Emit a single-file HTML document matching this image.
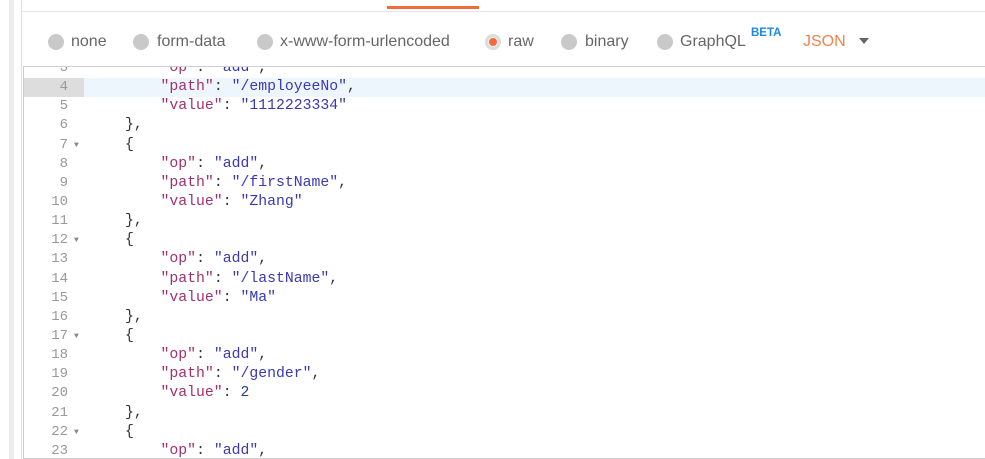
<!DOCTYPE html>
<html><head><style>
body{margin:0;width:985px;height:459px;background:#fff;position:relative;overflow:hidden;font-family:"Liberation Sans",sans-serif}
.strip{position:absolute;left:9px;top:0;width:5px;height:459px;background:#ececec}
.vl{position:absolute;left:21px;top:0;width:1px;height:459px;background:#e0e0e0}
.hl{position:absolute;left:22px;top:11px;right:0;height:1px;background:#e6e6e6}
.tab{position:absolute;left:387px;top:6px;width:92px;height:3px;background:#f26b3a}
.radio{position:absolute;top:33px;font-size:16px;color:#666;white-space:nowrap;line-height:18px}
.dot{position:absolute;top:34px;width:16px;height:16px;border-radius:50%;background:#c9c9c9}
.editor{position:absolute;left:23px;top:66px;right:-2px;height:391px;border:1px solid #cfcfcf;overflow:hidden}
.lines{position:absolute;left:0;top:-8px;width:1000px;font-family:"Liberation Mono",monospace;font-size:14.8px}
.ln{height:19.15px;line-height:19.15px;position:relative;white-space:pre}
.n{position:absolute;left:0;width:44px;text-align:right;color:#999;font-size:14px}
.f{position:absolute;left:50px;color:#888;font-size:8px}
.c{position:absolute;left:101px;color:#333}
.k{color:#a3306d}.s{color:#3939b5}.num{color:#273d8f}
.act{background:#edf6fd}
.act .n{background:#dddddd;width:60px;padding-right:16px;box-sizing:border-box;left:0}
</style></head><body>
<div class="strip"></div><div class="vl"></div>
<div class="tab"></div><div class="hl"></div>
<span class="dot" style="left:48px"></span><div class="radio" style="left:71px">none</div>
<span class="dot" style="left:133px"></span><div class="radio" style="left:157px">form-data</div>
<span class="dot" style="left:257px"></span><div class="radio" style="left:280px">x-www-form-urlencoded</div>
<span class="dot" style="left:485px;background:#f3f3f3;box-shadow:inset 0 0 0 3px #ddd"><span style="display:block;width:8px;height:8px;margin:4px;border-radius:50%;background:#f26b3a"></span></span><div class="radio" style="left:508px">raw</div>
<span class="dot" style="left:561px"></span><div class="radio" style="left:585px">binary</div>
<span class="dot" style="left:657px"></span><div class="radio" style="left:680px">GraphQL</div>
<div style="position:absolute;left:751px;top:27px;color:#1a8ae6;font-size:11.5px;font-weight:bold">BETA</div>
<div class="radio" style="left:803px;color:#f0824a">JSON</div>
<div style="position:absolute;left:859px;top:38px;width:0;height:0;border-left:5px solid transparent;border-right:5px solid transparent;border-top:6px solid #666"></div>
<div class="editor">
<div class="lines">
<div class="ln"><span class="n">3</span><span class="c">    <span class="k">"op"</span>: <span class="s">"add"</span>,</span></div>
<div class="ln act"><span class="n">4</span><span class="c">    <span class="k">"path"</span>: <span class="s">"/employeeNo"</span>,</span></div>
<div class="ln"><span class="n">5</span><span class="c">    <span class="k">"value"</span>: <span class="s">"1112223334"</span></span></div>
<div class="ln"><span class="n">6</span><span class="c">},</span></div>
<div class="ln"><span class="n">7</span><span class="f">▼</span><span class="c">{</span></div>
<div class="ln"><span class="n">8</span><span class="c">    <span class="k">"op"</span>: <span class="s">"add"</span>,</span></div>
<div class="ln"><span class="n">9</span><span class="c">    <span class="k">"path"</span>: <span class="s">"/firstName"</span>,</span></div>
<div class="ln"><span class="n">10</span><span class="c">    <span class="k">"value"</span>: <span class="s">"Zhang"</span></span></div>
<div class="ln"><span class="n">11</span><span class="c">},</span></div>
<div class="ln"><span class="n">12</span><span class="f">▼</span><span class="c">{</span></div>
<div class="ln"><span class="n">13</span><span class="c">    <span class="k">"op"</span>: <span class="s">"add"</span>,</span></div>
<div class="ln"><span class="n">14</span><span class="c">    <span class="k">"path"</span>: <span class="s">"/lastName"</span>,</span></div>
<div class="ln"><span class="n">15</span><span class="c">    <span class="k">"value"</span>: <span class="s">"Ma"</span></span></div>
<div class="ln"><span class="n">16</span><span class="c">},</span></div>
<div class="ln"><span class="n">17</span><span class="f">▼</span><span class="c">{</span></div>
<div class="ln"><span class="n">18</span><span class="c">    <span class="k">"op"</span>: <span class="s">"add"</span>,</span></div>
<div class="ln"><span class="n">19</span><span class="c">    <span class="k">"path"</span>: <span class="s">"/gender"</span>,</span></div>
<div class="ln"><span class="n">20</span><span class="c">    <span class="k">"value"</span>: <span class="num">2</span></span></div>
<div class="ln"><span class="n">21</span><span class="c">},</span></div>
<div class="ln"><span class="n">22</span><span class="f">▼</span><span class="c">{</span></div>
<div class="ln"><span class="n">23</span><span class="c">    <span class="k">"op"</span>: <span class="s">"add"</span>,</span></div>
</div>
</div>
</body></html>
